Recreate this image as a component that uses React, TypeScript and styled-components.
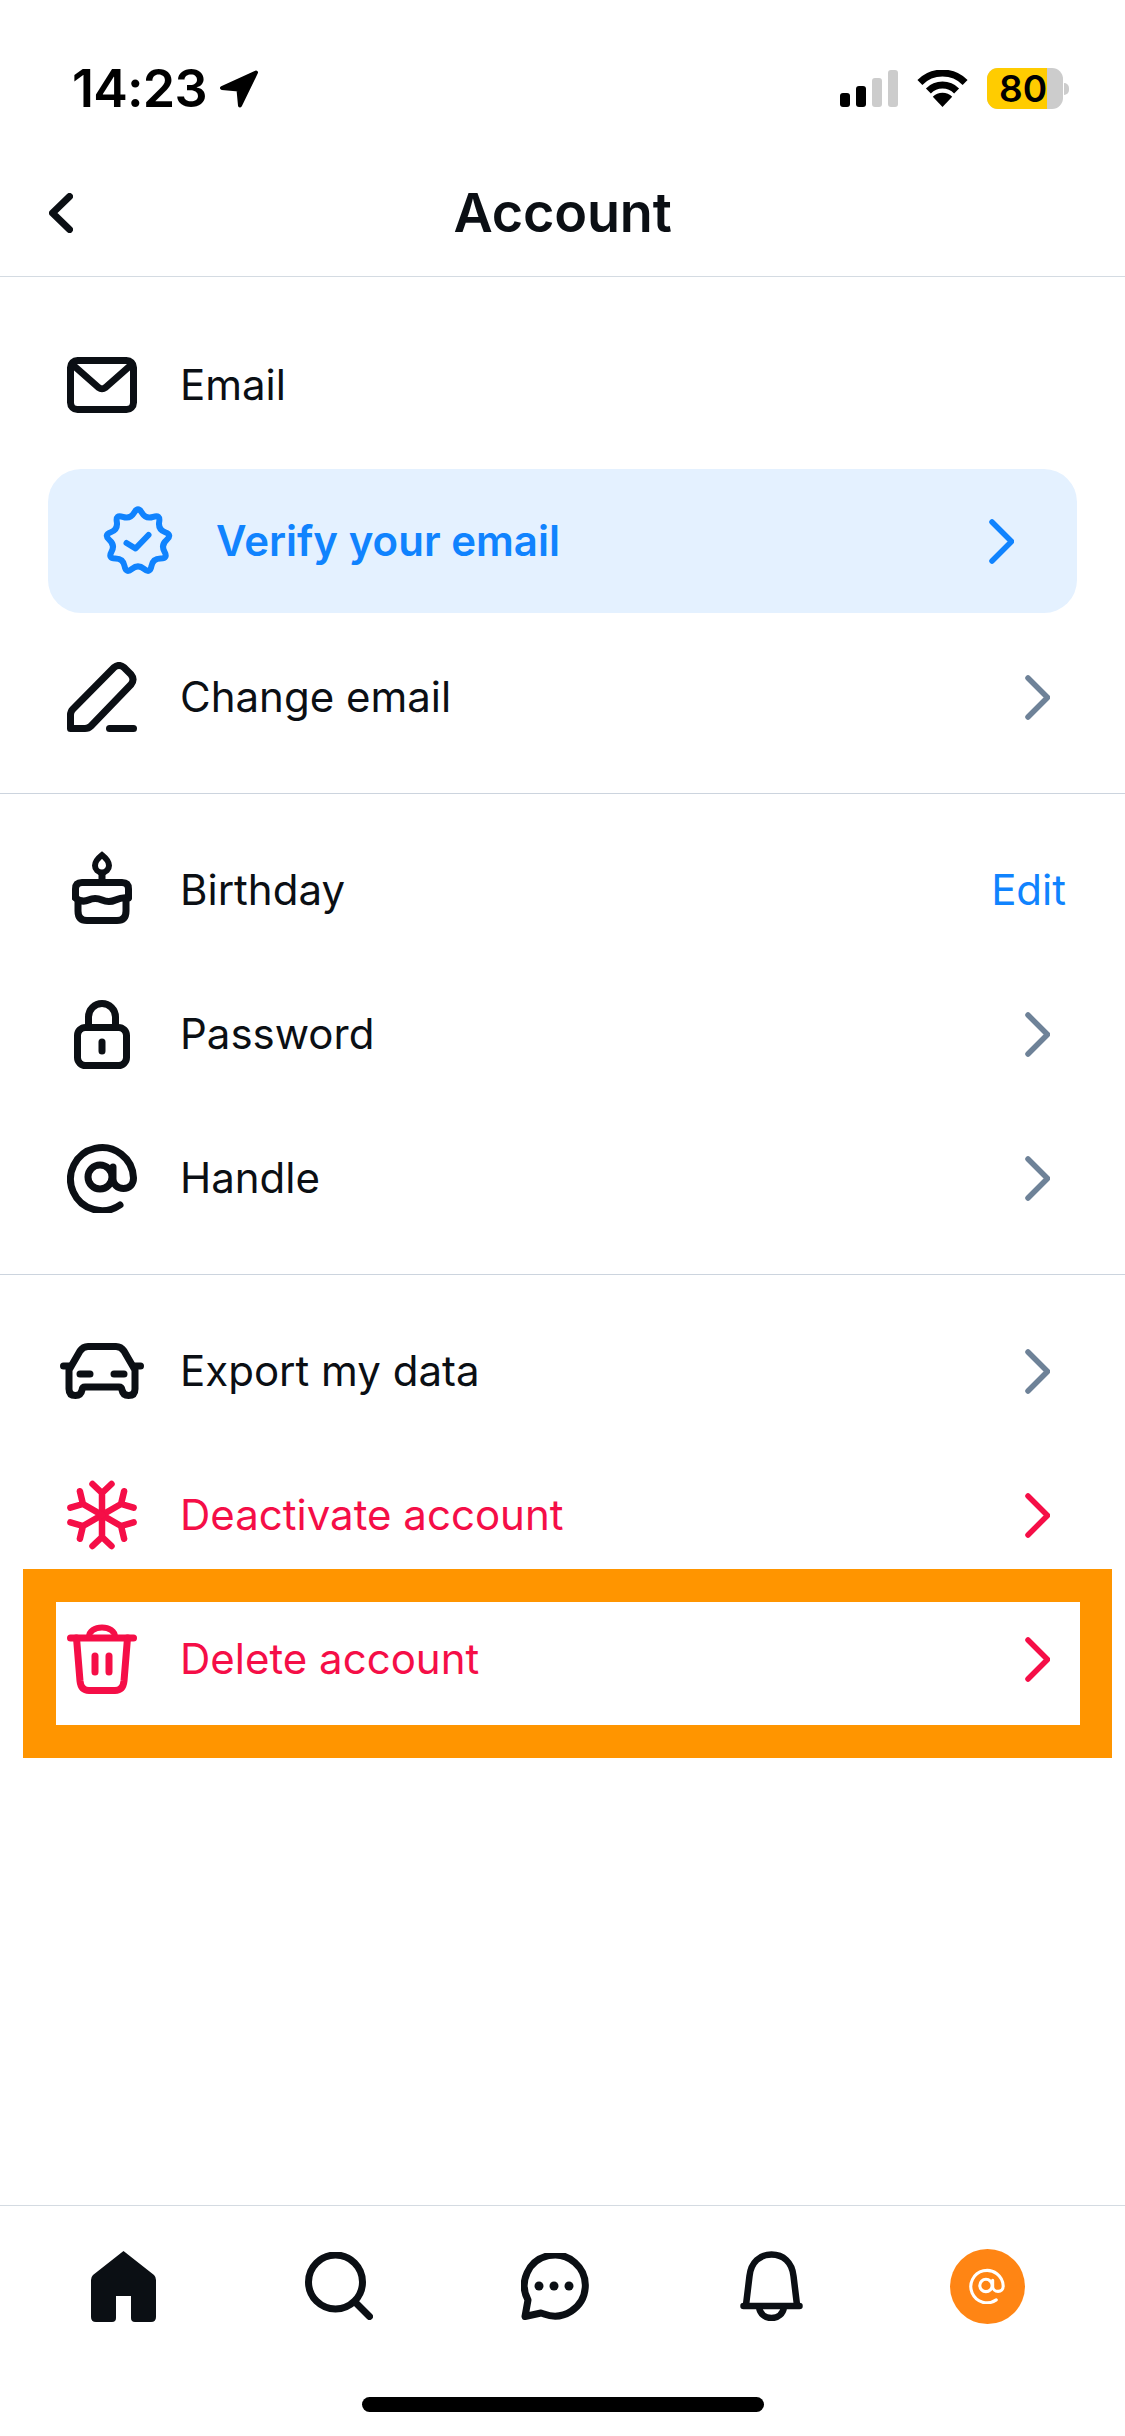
import React from 'react';
import styled, { createGlobalStyle } from 'styled-components';

const GlobalStyle = createGlobalStyle`
  html, body {
    margin: 0;
    padding: 0;
    background: #fff;
  }
  * {
    box-sizing: border-box;
  }
`;

const Page = styled.div`
  width: 1125px;
  height: 2436px;
  display: flex;
  flex-direction: column;
  background: #fff;
  color: #0b0f14;
  font-family: Inter, "Liberation Sans", sans-serif;
  overflow: hidden;
`;

const StatusBar = styled.div`
  height: 150px;
  padding: 68px 56px 0 72px;
  display: flex;
  justify-content: space-between;
  align-items: flex-start;
  color: #000;
`;

const StatusLeft = styled.div`
  display: flex;
  align-items: center;
  gap: 12px;
  height: 41px;
`;

const Time = styled.span`
  font-size: 52px;
  font-weight: 600;
  letter-spacing: -0.8px;
  line-height: 41px;
`;

const StatusRight = styled.div`
  display: flex;
  align-items: center;
  height: 41px;
`;

const Signal = styled.div`
  display: flex;
  align-items: flex-end;
  gap: 6px;
  height: 37px;
  margin-right: 19px;
`;

const SignalBar = styled.div<{ $h: number; $on?: boolean }>`
  width: 10px;
  height: ${(p) => p.$h}px;
  border-radius: 3px;
  background: ${(p) => (p.$on ? '#000' : '#ccc')};
`;

const Battery = styled.div`
  width: 76px;
  height: 41px;
  border-radius: 11px;
  background: #ccc;
  margin-left: 19px;
`;

const BatteryFill = styled.div`
  width: 60px;
  height: 41px;
  border-radius: 11px 0 0 11px;
  background: #ffcc00;
  padding-left: 12px;
  font-size: 37px;
  font-weight: 600;
  line-height: 41px;
  white-space: nowrap;
`;

const BatteryNub = styled.div`
  width: 5px;
  height: 12px;
  margin-left: 1px;
  border-radius: 0 6px 6px 0;
  background: #ccc;
`;

const Header = styled.header`
  height: 127px;
  padding-left: 49px;
  display: grid;
  grid-template-columns: 24px 1fr 73px;
  align-items: center;
  border-bottom: 1px solid #d4dbe2;
`;

const Title = styled.h1`
  margin: 0;
  text-align: center;
  font-size: 54px;
  font-weight: 600;
  letter-spacing: -0.2px;
  line-height: 60px;
`;

const Section = styled.section<{ $top?: number; $line?: boolean }>`
  padding: ${(p) => p.$top ?? 24}px 0 24px;
  border-bottom: ${(p) => (p.$line ? '1px solid #ccd4de' : 'none')};
`;

const Row = styled.div<{ $danger?: boolean }>`
  position: relative;
  height: 144px;
  padding: 0 75px 0 57px;
  display: flex;
  align-items: center;
  color: ${(p) => (p.$danger ? '#f50e47' : '#0b0f14')};
`;

const IconSlot = styled.div`
  width: 90px;
  flex: none;
  display: flex;
  justify-content: center;
  align-items: center;
`;

const Label = styled.span`
  flex: 1;
  margin-left: 33px;
  font-size: 42px;
  font-weight: 400;
  line-height: 50px;
`;

const Banner = styled.div`
  height: 144px;
  margin: 12px 48px;
  padding: 0 63px 0 45px;
  display: flex;
  align-items: center;
  border-radius: 33px;
  background: #e4f1ff;
  color: #1083fe;
`;

const BannerLabel = styled(Label)`
  font-weight: 600;
`;

const EditLink = styled.span`
  margin-right: -16px;
  font-size: 42px;
  line-height: 50px;
  color: #1083fe;
`;

const Chevron = styled.svg<{ $tone?: string }>`
  width: 25px;
  height: 45px;
  flex: none;
  fill: none;
  stroke: ${(p) => p.$tone ?? '#6e8298'};
  stroke-width: 5.5;
  stroke-linecap: round;
  stroke-linejoin: round;
`;

// orange annotation drawn on top of the screenshot
const Highlight = styled.div`
  position: absolute;
  top: -18px;
  bottom: -27px;
  left: 23px;
  right: 13px;
  border: solid #ff9500;
  border-width: 33px 32px 33px 33px;
  pointer-events: none;
`;

const Spacer = styled.div`
  flex: 1;
`;

const TabBar = styled.nav`
  height: 161px;
  padding-left: 15px;
  display: grid;
  grid-template-columns: repeat(5, 216px);
  justify-items: center;
  align-items: center;
  border-top: 1px solid #d4dbe2;
`;

const Avatar = styled.div`
  width: 75px;
  height: 75px;
  border-radius: 50%;
  background: #ff8514;
  color: #fff;
  display: flex;
  justify-content: center;
  align-items: center;
`;

const HomeIndicator = styled.div`
  width: 402px;
  height: 15px;
  margin: 31px auto 24px;
  border-radius: 8px;
  background: #000;
`;

const Line = styled.svg<{ $w?: number }>`
  flex: none;
  fill: none;
  stroke: currentColor;
  stroke-width: ${(p) => p.$w ?? 7};
  stroke-linecap: round;
  stroke-linejoin: round;
`;

const Solid = styled.svg`
  flex: none;
  fill: currentColor;
`;

const ChevronRight = ({ tone }: { tone?: string }) => (
  <Chevron $tone={tone} viewBox="0 0 25 45">
    <path d="M3 3l19.5 19.5L3 42" />
  </Chevron>
);

const MailIcon = () => (
  <Line width={70} height={56} viewBox="0 0 70 56">
    <rect x="3.5" y="3.5" width="63" height="49" rx="7" />
    <path d="M6 8l25.5 22.5q3.5 2.5 7 0L64 8" />
  </Line>
);

// nine point seal: alternate far and near control points, smoothed with quadratics
const sealPath = () => {
  const pts: [number, number][] = [];
  for (let i = 0; i < 18; i++) {
    const r = i % 2 === 0 ? 35 : 23;
    const a = (i * Math.PI) / 9 - Math.PI / 2;
    pts.push([35 + r * Math.cos(a), 35 + r * Math.sin(a)]);
  }
  const mid = (a: [number, number], b: [number, number]) =>
    `${((a[0] + b[0]) / 2).toFixed(1)} ${((a[1] + b[1]) / 2).toFixed(1)}`;
  let d = `M${mid(pts[17], pts[0])}`;
  pts.forEach((p, i) => {
    d += `Q${p[0].toFixed(1)} ${p[1].toFixed(1)} ${mid(p, pts[(i + 1) % 18])}`;
  });
  return `${d}Z`;
};

const SealIcon = () => (
  <Line $w={6} width={70} height={70} viewBox="0 0 70 70">
    <path d={sealPath()} />
    <path d="M23.5 37l9 5.5L45.5 29" />
  </Line>
);

const PencilIcon = () => (
  <Line width={70} height={70} viewBox="0 0 70 70">
    <path d="M3.5 66.5V53q0-3.5 2.5-6L47 5.5q5-4 10 0l7 7q4 5 0 10L24 64q-2.5 2.5-6 2.5z" />
    <path d="M42.5 66.5h24" />
  </Line>
);

const CakeIcon = () => (
  <Line width={60} height={78} viewBox="0 0 60 78">
    <path d="M3.5 46v-8q0-6.5 6.5-6.5h40q6.5 0 6.5 6.5v8" />
    <path d="M3.5 47q6.5 5 13 2t13.5 0 13.5 0 13-2" />
    <path d="M6 50v10q0 9.5 9 9.5h30q9 0 9-9.5V50" />
    <path d="M30 23v8" />
    <path d="M30 4q7 5.5 7 10.5a7 7 0 0 1-14 0Q23 9.5 30 4z" strokeWidth="6" strokeLinejoin="miter" />
  </Line>
);

const LockIcon = () => (
  <Line width={56} height={69} viewBox="0 0 56 69">
    <rect x="3.5" y="27.5" width="49" height="38" rx="8" />
    <path d="M14.5 27V17a13.5 13.5 0 0 1 27 0v10" />
    <path d="M28 42v9" />
  </Line>
);

const AtIcon = ({ size = 70, weight }: { size?: number; weight?: number }) => (
  <Line $w={weight} width={size} height={size} viewBox="0 0 70 70">
    <path d="M53 62A31.5 31.5 0 1 1 66.5 35c0 6-4 10.5-10 10.5S46 41 46 36V24" />
    <circle cx="33" cy="34" r="12" />
  </Line>
);

const CarIcon = () => (
  <Line width={84} height={56} viewBox="0 0 84 56">
    <path d="M9 27L20 8q3-4.5 8-4.5h28q5 0 8 4.5l11 19v19q0 6.5-6.5 6.5-5.5 0-6.5-5.5-.5-3-3-3H25q-2.5 0-3 3-1 5.5-6.5 5.5Q9 52.5 9 46z" />
    <path d="M3.5 23H9M75 23h5.5M20 31h10M54 31h10" />
  </Line>
);

const SnowflakeIcon = () => (
  <Line $w={6.5} width={70} height={70} viewBox="0 0 70 70">
    {[0, 60, 120, 180, 240, 300].map((deg) => (
      <path key={deg} transform={`rotate(${deg} 35 35)`} d="M35 35V13M25.5 4l9.5 9 9.5-9" />
    ))}
  </Line>
);

const TrashIcon = () => (
  <Line width={70} height={70} viewBox="0 0 70 70">
    <path d="M3.5 14h63" />
    <path d="M22 13c0-6 6-9.5 13-9.5S48 7 48 13" strokeWidth="6" />
    <path d="M9.5 14L13 57q1 9.5 9 9.5h26q8 0 9-9.5l3.5-43" />
    <path d="M28 32v16M42 32v16" />
  </Line>
);

const HomeIcon = () => (
  <Solid width={65} height={71} viewBox="0 0 65 71">
    <path d="M32.5 0L63 24q2 2 2 5v37q0 5-5 5H44q-4 0-4-4V45H25v22q0 4-4 4H5q-5 0-5-5V29q0-3 2-5z" />
  </Solid>
);

const SearchIcon = () => (
  <Line width={68} height={68} viewBox="0 0 68 68">
    <circle cx="30.5" cy="30" r="27" />
    <path d="M50 50l14.5 14.5" />
  </Line>
);

const ChatIcon = () => (
  <Line width={68} height={67} viewBox="0 0 68 67">
    <path d="M7 47A30.5 30.5 0 1 1 23 61l-3-1-16 3.5z" />
    <g fill="currentColor" stroke="none">
      <circle cx="18" cy="33" r="4.5" />
      <circle cx="33" cy="33" r="4.5" />
      <circle cx="48" cy="33" r="4.5" />
    </g>
  </Line>
);

const BellIcon = () => (
  <Line $w={6.5} width={63} height={70} viewBox="0 0 63 70">
    <path d="M6 54L9.5 25C11 11 20 3.5 31.5 3.5S52 11 53.5 25L57 54" />
    <path d="M3.5 55h56" />
    <path d="M19 56c1 7 6 11 12.5 11S43 63 44 56" />
  </Line>
);

const LocationArrow = () => (
  <Solid width={40} height={38} viewBox="0 0 40 38">
    <path
      d="M37 2.500L3 18l16.500 1.500 1.500 16z"
      stroke="currentColor"
      strokeWidth="4"
      strokeLinejoin="round"
    />
  </Solid>
);

const WifiIcon = () => (
  <svg width={51} height={37} viewBox="0 0 51 37" fill="none" stroke="#000" strokeWidth="7">
    <path d="M2.9 12.4a32 32 0 0 1 45.2 0" />
    <path d="M11.4 20.9a20 20 0 0 1 28.2 0" />
    <path d="M25.5 37L15.8 26.8a13.5 13.5 0 0 1 19.4 0z" fill="#000" stroke="none" />
  </svg>
);

const BackIcon = () => (
  <Line width={24} height={40} viewBox="0 0 24 40">
    <path d="M20.5 3.5L3.5 20l17 16.5" />
  </Line>
);

export default function App() {
  return (
    <Page>
      <GlobalStyle />
      <StatusBar>
        <StatusLeft>
          <Time>14:23</Time>
          <LocationArrow />
        </StatusLeft>
        <StatusRight>
          <Signal>
            <SignalBar $h={14} $on />
            <SignalBar $h={21} $on />
            <SignalBar $h={29} />
            <SignalBar $h={37} />
          </Signal>
          <WifiIcon />
          <Battery>
            <BatteryFill>80</BatteryFill>
          </Battery>
          <BatteryNub />
        </StatusRight>
      </StatusBar>

      <Header>
        <BackIcon />
        <Title>Account</Title>
      </Header>

      <Section $top={36} $line>
        <Row>
          <IconSlot><MailIcon /></IconSlot>
          <Label>Email</Label>
        </Row>
        <Banner>
          <IconSlot><SealIcon /></IconSlot>
          <BannerLabel>Verify your email</BannerLabel>
          <ChevronRight tone="#1083fe" />
        </Banner>
        <Row>
          <IconSlot><PencilIcon /></IconSlot>
          <Label>Change email</Label>
          <ChevronRight />
        </Row>
      </Section>

      <Section $line>
        <Row>
          <IconSlot><CakeIcon /></IconSlot>
          <Label>Birthday</Label>
          <EditLink>Edit</EditLink>
        </Row>
        <Row>
          <IconSlot><LockIcon /></IconSlot>
          <Label>Password</Label>
          <ChevronRight />
        </Row>
        <Row>
          <IconSlot><AtIcon /></IconSlot>
          <Label>Handle</Label>
          <ChevronRight />
        </Row>
      </Section>

      <Section>
        <Row>
          <IconSlot><CarIcon /></IconSlot>
          <Label>Export my data</Label>
          <ChevronRight />
        </Row>
        <Row $danger>
          <IconSlot><SnowflakeIcon /></IconSlot>
          <Label>Deactivate account</Label>
          <ChevronRight tone="#f50e47" />
        </Row>
        <Row $danger>
          <IconSlot><TrashIcon /></IconSlot>
          <Label>Delete account</Label>
          <ChevronRight tone="#f50e47" />
          <Highlight />
        </Row>
      </Section>

      <Spacer />

      <TabBar>
        <HomeIcon />
        <SearchIcon />
        <ChatIcon />
        <BellIcon />
        <Avatar><AtIcon size={36} weight={6} /></Avatar>
      </TabBar>
      <HomeIndicator />
    </Page>
  );
}
